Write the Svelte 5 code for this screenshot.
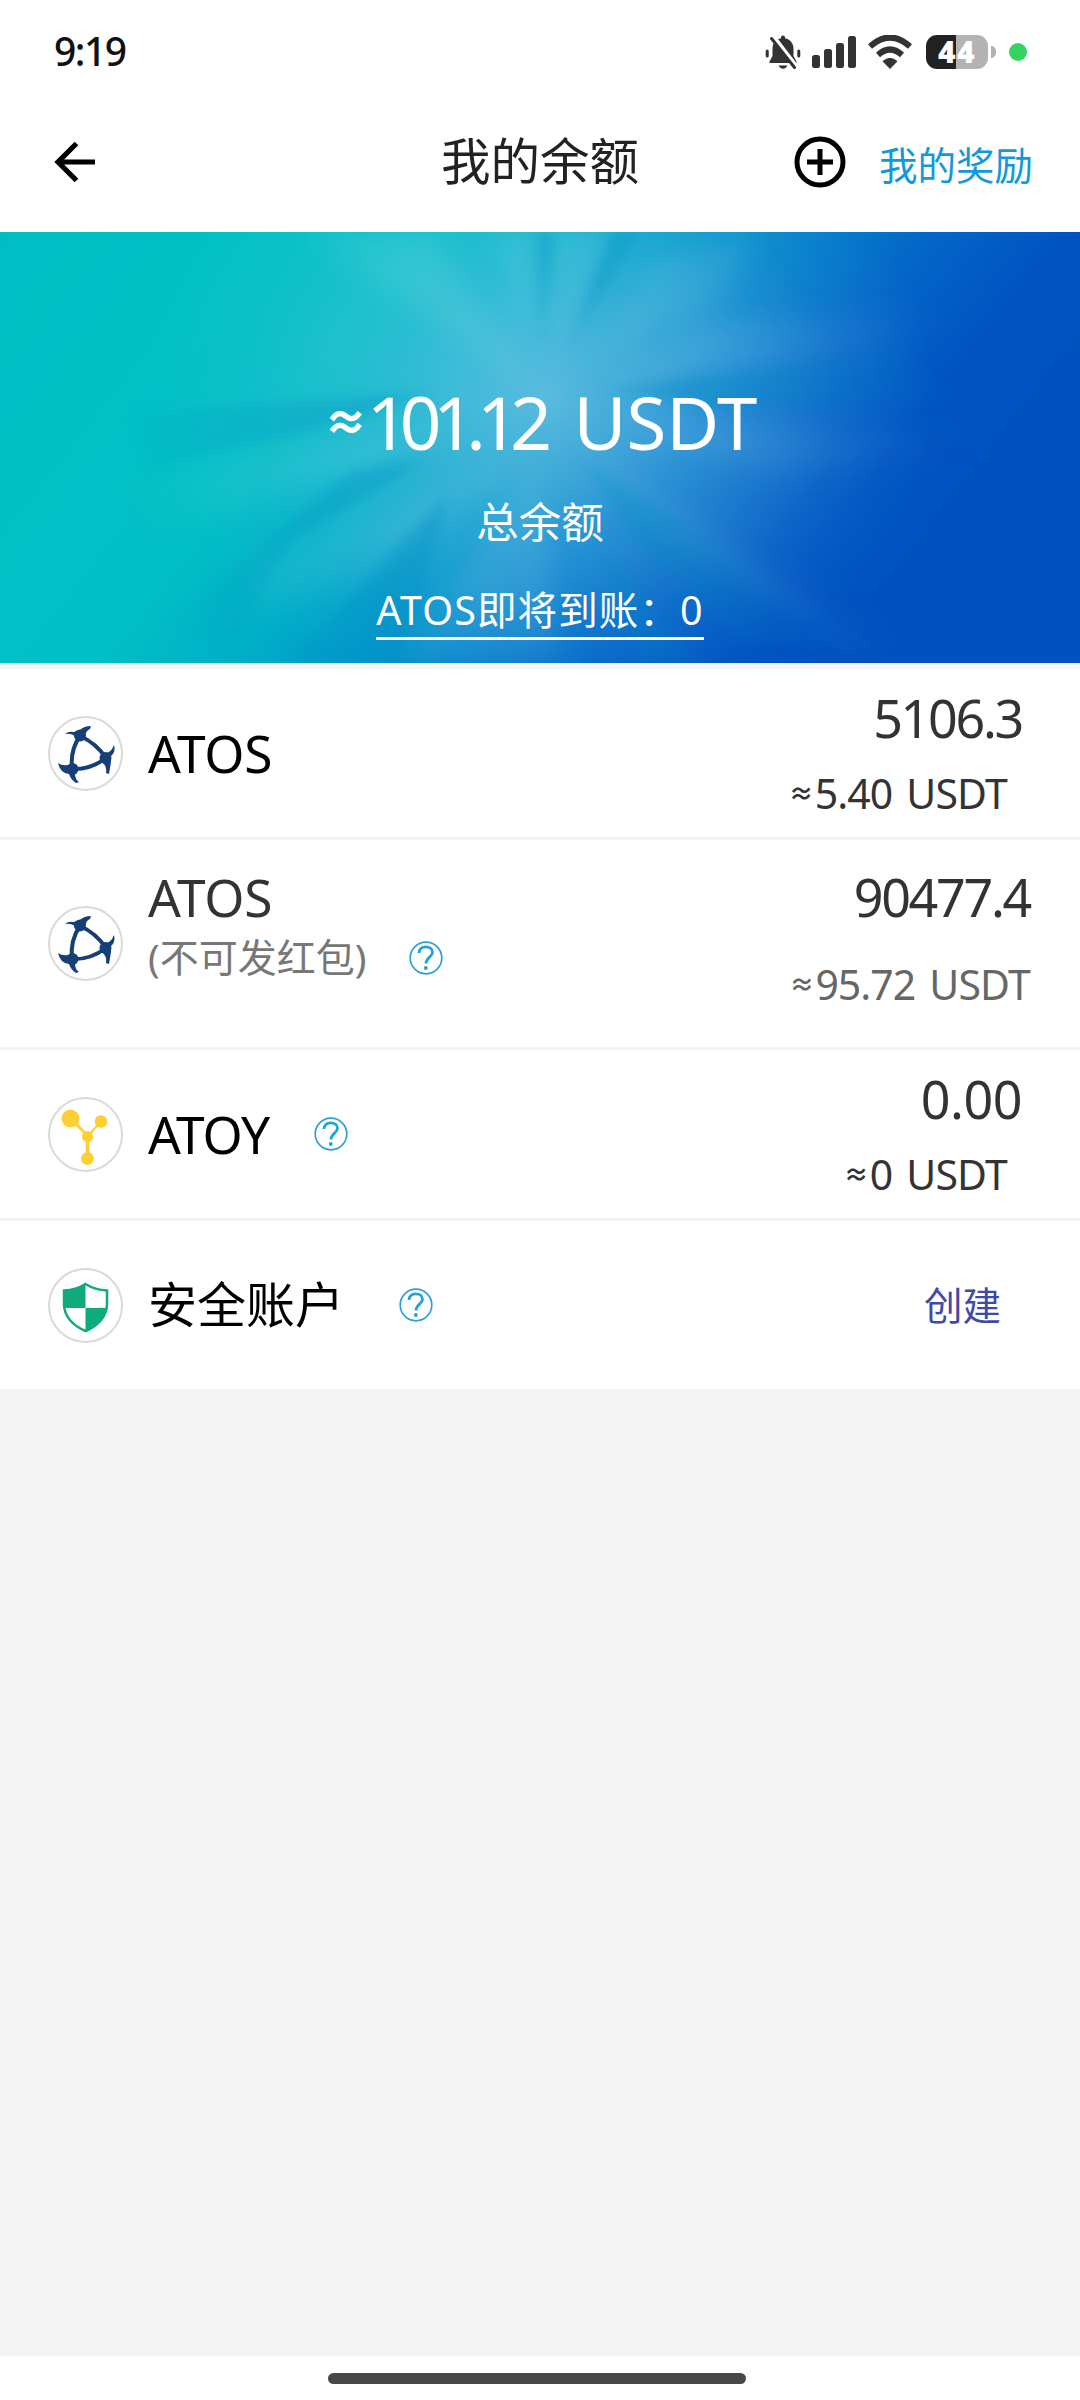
<script lang="ts">
	type Icon = 'atos' | 'atoy' | 'shield';
	type Account = {
		icon: Icon;
		name: string;
		note?: string;
		help?: boolean;
		amount?: string;
		usdt?: string;
		action?: string;
		kind: string;
	};

	const total = '101.12';
	const accounts: Account[] = [
		{ icon: 'atos', name: 'ATOS', amount: '5106.3', usdt: '5.40', kind: 'normal' },
		{ icon: 'atos', name: 'ATOS', note: '(不可发红包)', help: true, amount: '90477.4', usdt: '95.72', kind: 'locked' },
		{ icon: 'atoy', name: 'ATOY', help: true, amount: '0.00', usdt: '0', kind: 'empty' },
		{ icon: 'shield', name: '安全账户', help: true, action: '创建', kind: 'safe' }
	];

	// light and dark beams of the banner, as wedges leaving the centre
	const lightRays = [
		'530,150 300,0 430,0',
		'528,130 495,0 537,0',
		'556,140 554,0 612,0',
		'590,130 650,30 760,0 720,70',
		'600,150 700,90 960,80 860,124',
		'600,190 960,200 980,225 780,240',
		'580,225 900,410 860,430 690,320',
		'530,220 260,330 240,380 360,350',
		'540,230 400,430 560,430',
		'470,190 120,250 160,300 320,250'
	];
	const darkRays = [
		'541,115 537,0 554,0',
		'565,122 612,0 638,0',
		'600,158 900,118 960,170 720,175',
		'440,160 130,180 150,235 280,207',
		'430,225 350,240 130,420 230,420 290,310',
		'450,260 290,430 400,430',
		'580,228 700,300 880,420 740,410 630,300',
		'600,320 640,430 700,430'
	];
</script>

<div class="screen">
	<div class="status">
		<span class="time">9:19</span>
		<svg class="bell" width="36" height="36" viewBox="0 0 36 36">
			<path d="M18 1.5c1.2 0 2 .8 2 2v.8c5 1 8.500 5 8.500 10.200V22l3 5.500v1.500H4.500v-1.500L7.500 22v-7.500C7.500 9.300 11 5.300 16 4.300v-.8c0-1.200.8-2 2-2z" fill="#333" />
			<path d="M13.500 31.500h9c-.8 2-2.500 3.200-4.500 3.200s-3.700-1.200-4.500-3.200z" fill="#333" />
			<path d="M2.200 17v5M33.800 17v5" stroke="#333" stroke-width="3" stroke-linecap="round" />
			<path d="M8.500 2.500L32 33" stroke="#fff" stroke-width="4" />
			<path d="M6.500 4.500L29.500 33.500" stroke="#333" stroke-width="3" stroke-linecap="round" />
		</svg>
		<svg class="signal" width="44" height="34" viewBox="0 0 44 34" fill="#333">
			<rect x="0" y="20" width="8" height="13" rx="2.500" />
			<rect x="12" y="14" width="8" height="19" rx="2.500" />
			<rect x="24" y="8" width="8" height="25" rx="2.500" />
			<rect x="36" y="1" width="8" height="32" rx="2.500" />
		</svg>
		<svg class="wifi" width="46" height="34" viewBox="0 0 46 34">
			<path d="M3 11.500Q23-6.500 43 11.500M11 20Q23 9 35 20" fill="none" stroke="#333" stroke-width="6" />
			<path d="M16 26.300Q23 20.500 30 26.300L23 33.500z" fill="#333" stroke="#333" stroke-linejoin="round" />
		</svg>
		<div class="battery"><span>44</span></div>
		<i class="tip"></i>
		<i class="live"></i>
	</div>

	<header>
		<svg class="back" width="42" height="42" viewBox="0 0 42 42" fill="none" stroke="#000" stroke-width="5.200">
			<path d="M22.500 2.500L4 21L22.500 39.500M4.500 21H41" />
		</svg>
		<h1>我的余额</h1>
		<div class="tools">
			<svg width="52" height="52" viewBox="0 0 52 52" fill="none" stroke="#000" stroke-width="5">
				<circle cx="26" cy="26" r="23" />
				<path d="M26 13v26M13 26h26" />
			</svg>
			<a href="#rewards">我的奖励</a>
		</div>
	</header>

	<section class="banner">
		<svg class="rays" viewBox="0 0 1080 431" preserveAspectRatio="none">
			<defs>
				<filter id="soft" x="-10%" y="-10%" width="120%" height="120%"><feGaussianBlur stdDeviation="13" /></filter>
				<filter id="fine" x="-10%" y="-10%" width="120%" height="120%"><feGaussianBlur stdDeviation="6" /></filter>
				<radialGradient id="fade" gradientUnits="userSpaceOnUse" cx="540" cy="180" r="440">
					<stop offset="0" stop-color="#fff" stop-opacity=".06" />
					<stop offset=".4" stop-color="#fff" stop-opacity=".09" />
					<stop offset="1" stop-color="#fff" stop-opacity="0" />
				</radialGradient>
				<radialGradient id="shade" gradientUnits="userSpaceOnUse" cx="540" cy="180" r="440">
					<stop offset="0" stop-color="#0094c4" stop-opacity=".1" />
					<stop offset=".35" stop-color="#008cc2" stop-opacity=".34" />
					<stop offset="1" stop-color="#0078c0" stop-opacity="0" />
				</radialGradient>
			</defs>
			<g fill="url(#fade)" filter="url(#soft)">
				{#each lightRays as points}
					<polygon {points} />
				{/each}
			</g>
			<g fill="url(#shade)" filter="url(#fine)">
				{#each darkRays as points}
					<polygon {points} />
				{/each}
			</g>
		</svg>
		<div class="total"><span class="approx">≈</span><span class="num">{total}</span><span class="unit">USDT</span></div>
		<div class="label">总余额</div>
		<div class="incoming"><span>ATOS即将到账：0</span></div>
	</section>

	<ul>
		{#each accounts as account}
			<li class={account.kind}>
				<div class="coin">
					{#if account.icon == 'atos'}
						<svg viewBox="0 0 75 75" fill="none" stroke="#163f76">
							<path d="M32 20Q22 34 24 53Q42 54 58 42Q48 27 32 20z" stroke-width="4" />
							<g fill="#163f76" stroke="none">
								<circle cx="32" cy="19.500" r="6" />
								<circle cx="57.500" cy="42" r="6" />
								<circle cx="24.500" cy="53" r="6" />
								<path d="M17 18Q20 15 26 16L32 14Q36 10 43 10L42 13Q38 14 37 21L28 22Q25 17 17 18z" />
								<path d="M66 29Q68 36 63 40L63 46Q62 52 61 58L58 57Q59 51 55 47L56 38Q63 37 66 29z" />
								<path d="M10 47Q14 50 20 49L28 52L27 58Q27 63 31 66L28 67Q23 64 21 58Q12 57 10 47z" />
							</g>
						</svg>
					{:else if account.icon == 'atoy'}
						<svg viewBox="0 0 75 75" fill="#fdcf32" stroke="#fdcf32">
							<path d="M23 22L40 39" stroke-width="3" />
							<path d="M53 24L40 39" stroke-width="2" />
							<path d="M39.500 39V62" stroke-width="3.500" />
							<g stroke="none">
								<circle cx="22.500" cy="21.500" r="9" />
								<circle cx="53" cy="24.500" r="6.200" />
								<circle cx="39.500" cy="39.500" r="5.500" />
								<circle cx="39.500" cy="61.500" r="6.400" />
							</g>
						</svg>
					{:else}
						<svg viewBox="0 0 75 75">
							<path d="M37.500 16Q47 22 59 22.500V37Q58 54 37.500 63Q17 54 16 37V22.500Q28 22 37.500 16z" fill="none" stroke="#0fab7c" stroke-width="2.500" />
							<path d="M37.500 15Q28 22 15 22.500V36L15.500 40H37.500zM37.500 40H59.500Q56 56 37.500 64.500z" fill="#0fab7c" />
						</svg>
					{/if}
				</div>
				<div class="names">
					<div class="name">{account.name}</div>
					{#if account.note}
						<div class="note">{account.note}</div>
					{/if}
				</div>
				{#if account.help}
					<svg class="help" width="34" height="34" viewBox="0 0 34 34" fill="none" stroke="#22a3df">
						<circle cx="17" cy="17" r="15.800" stroke-width="1.700" stroke="#2f9fd8" />
						<path d="M10 12C10.300 7.800 13 5.800 16.800 5.800C20.800 5.800 23.500 8 23.500 11.300C23.500 16 17 16.500 17 22.500" stroke-width="2.800" />
						<circle cx="16.800" cy="27" r="1.900" fill="#22a3df" stroke="none" />
					</svg>
				{/if}
				{#if account.action}
					<a class="create" href="#create">{account.action}</a>
				{:else}
					<div class="value">
						<div class="amount">{account.amount}</div>
						<div class="usdt"><span class="approx">≈</span><span class="num">{account.usdt}</span><span class="unit">USDT</span></div>
					</div>
				{/if}
			</li>
		{/each}
	</ul>

	<div class="blank"></div>
	<div class="home"><i></i></div>
</div>

<style>
	:global(body) {
		background: #fff;
	}

	.screen {
		width: 1080px;
		height: 2400px;
		display: flex;
		flex-direction: column;
		overflow: hidden;
		background: #fff;
		font-family: 'Noto Sans', 'Noto Sans CJK SC', sans-serif;
		color: #333;
	}

	svg {
		display: block;
		flex: none;
	}

	a {
		text-decoration: none;
	}

	.status {
		height: 104px;
		display: flex;
		align-items: center;
		padding-right: 53px;
	}

	.time {
		flex: 1;
		padding-left: 54px;
		font-size: 39px;
		line-height: 54px;
		margin-top: -2px;
		font-weight: 500;
		letter-spacing: -1.5px;
		color: #111;
	}

	.signal {
		margin-left: 11px;
	}

	.wifi {
		margin-left: 11px;
	}

	.battery {
		width: 62px;
		height: 34px;
		margin-left: 13px;
		border-radius: 11px;
		background: linear-gradient(90deg, #222 30px, #b3b3b3 30px);
		color: #fff;
		font: 800 30px/34px 'Open Sans', sans-serif;
		letter-spacing: 1.5px;
		text-align: center;
	}

	.tip {
		width: 5px;
		height: 12px;
		margin-left: 3px;
		border-radius: 0 6px 6px 0;
		background: #b3b3b3;
	}

	.live {
		width: 18px;
		height: 18px;
		margin-left: 13px;
		border-radius: 50%;
		background: #34d463;
	}

	header {
		height: 128px;
		display: grid;
		grid-template-columns: 1fr auto 1fr;
		align-items: start;
	}

	.back {
		margin: 37px 0 0 54px;
	}

	h1 {
		margin: 22px 0 0;
		font-size: 49.5px;
		line-height: 70px;
		font-weight: 400;
		color: #222;
	}

	.tools {
		display: flex;
		justify-content: flex-end;
		padding: 32px 47px 0 0;
	}

	.tools a {
		margin: 2px 0 0 33px;
		font-size: 38.5px;
		line-height: 54px;
		color: #1199dc;
		white-space: nowrap;
	}

	.banner {
		position: relative;
		height: 431px;
		background:
			radial-gradient(ellipse 390px 320px at 545px 165px, rgba(150, 208, 236, 0.6), rgba(120, 200, 232, 0.34) 40%, rgba(110, 195, 230, 0.1) 75%, transparent),
			linear-gradient(128deg, #00bec3 0%, #02c1c5 18%, #02bfc5 30%, #00b0c8 40%, #0098ca 49%, #047fcb 57%, #0366c8 66%, #0054c2 75%, #0050c0 84%);
		color: #fff;
		text-align: center;
		white-space: nowrap;
	}

	.rays {
		position: absolute;
		inset: 0;
		width: 100%;
		height: 100%;
	}

	.total,
	.label,
	.incoming {
		position: relative;
	}

	.total {
		display: flex;
		align-items: center;
		justify-content: center;
		padding: 140px 0 0 1px;
		font-size: 73px;
		line-height: 100px;
		font-weight: 450;
	}

	.total .approx {
		margin: 0 -1px 0 0;
		font-size: 44px;
		font-weight: 800;
	}

	.total .num {
		letter-spacing: -8.6px;
		margin-right: 30px;
	}

	.total .unit {
		font-size: 72.5px;
	}

	.label {
		padding-top: 20px;
		font-size: 42.5px;
		line-height: 60px;
	}

	.incoming {
		display: flex;
		justify-content: center;
		padding-top: 29px;
	}

	.incoming span {
		height: 56px;
		border-bottom: 3px solid #fff;
		font-size: 39.5px;
		line-height: 58px;
		letter-spacing: 1.1px;
	}

	ul {
		margin: 0;
		padding: 0;
		list-style: none;
		border-top: 6px solid #f3f5f7;
	}

	li {
		height: 168px;
		display: flex;
		align-items: center;
		padding-left: 48px;
		border-bottom: 3px solid #f2f2f2;
	}

	li:last-child {
		border-bottom: 0;
	}

	.coin {
		width: 75px;
		height: 75px;
		box-sizing: border-box;
		border: 2px solid #dadada;
		border-radius: 50%;
	}

	.coin svg {
		margin: -2px;
		width: 75px;
		height: 75px;
	}

	.names {
		margin-left: 25px;
		white-space: nowrap;
	}

	.name {
		font-size: 51.500px;
		line-height: 60px;
		letter-spacing: -0.3px;
		color: #000;
	}

	.help {
		margin-left: 43px;
	}

	.value {
		flex: 1;
		display: flex;
		flex-direction: column;
		align-items: flex-end;
		padding: 5px 58px 0 0;
		line-height: 74px;
	}

	.amount {
		font-size: 52px;
		letter-spacing: -2.3px;
	}

	.usdt {
		display: flex;
		margin-right: 15px;
		padding-top: 1px;
		font-size: 41px;
	}

	.usdt .approx {
		font-size: 25px;
		font-weight: 700;
		margin-right: 1px;
	}

	.usdt .num {
		letter-spacing: -1px;
		margin-right: 14px;
	}

	.usdt .unit {
		letter-spacing: -0.8px;
	}

	.locked {
		height: 207px;
	}

	.locked .names {
		margin-bottom: 34px;
	}

	.locked .name {
		color: #333;
	}

	.note {
		font-size: 39px;
		line-height: 60px;
		color: #777;
	}

	.locked .help {
		margin: 29px 0 0 43px;
	}

	.locked .value {
		padding: 0 50px 7px 0;
		line-height: 86px;
	}

	.locked .usdt {
		margin-right: 0;
		color: #666;
	}

	.empty .name {
		letter-spacing: -1.2px;
	}

	.empty .amount {
		letter-spacing: -0.5px;
	}

	.safe .name {
		padding-bottom: 2px;
		font-size: 49px;
		letter-spacing: 0;
	}

	.empty .help {
		margin-left: 45px;
	}

	.safe .help {
		margin-left: 55px;
	}

	.create {
		margin-left: auto;
		padding: 0 79px 5px 0;
		font-size: 38.500px;
		color: #3f4aa8;
	}

	.blank {
		flex: 1;
		background: #f3f3f3;
	}

	.home {
		height: 44px;
		display: flex;
		justify-content: center;
		padding-right: 6px;
	}

	.home i {
		width: 418px;
		height: 10.500px;
		margin-top: 17px;
		border-radius: 6px;
		background: #484848;
	}
</style>
